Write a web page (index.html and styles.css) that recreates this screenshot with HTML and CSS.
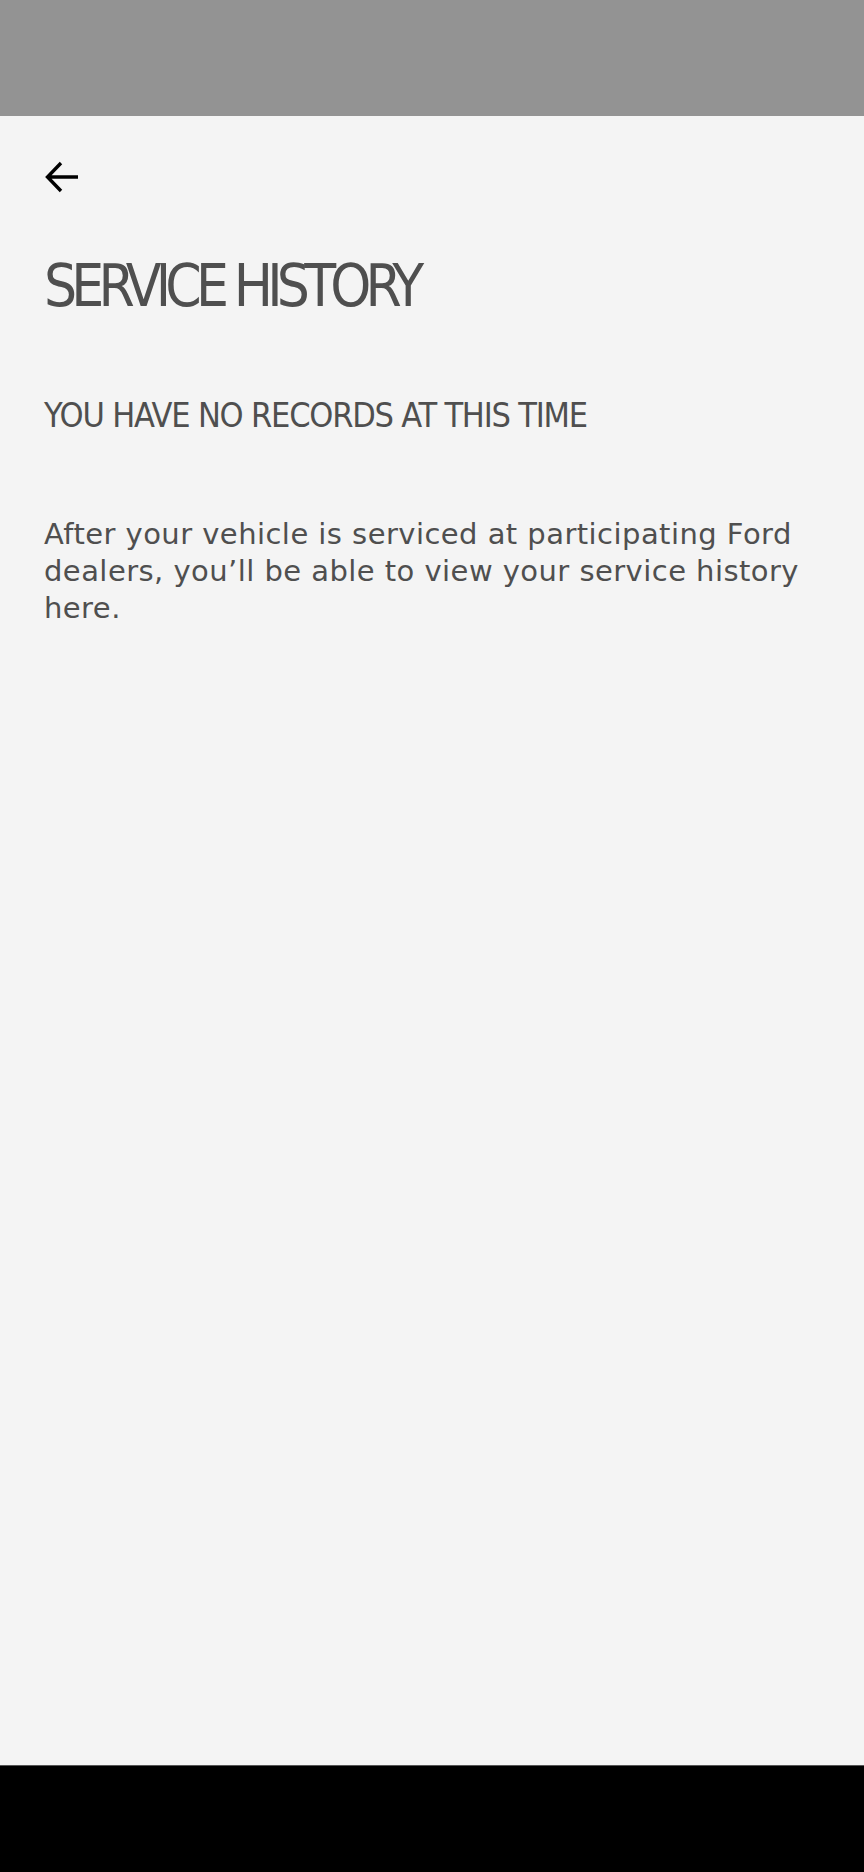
FILE: index.html
```html
<!DOCTYPE html>
<html>
<head>
<meta charset="utf-8">
<title>Service History</title>
<link rel="stylesheet" href="styles.css">
</head>
<body>
<div class="screen">
  <div class="status_bar"></div>

  <div class="content">
    <button class="back_btn" aria-label="Back">
      <svg width="36" height="34" viewBox="0 0 36 34">
        <path d="M34 17 H4 M17 3 L3.5 17 L17 31" fill="none" stroke="#000" stroke-width="3.4" stroke-linecap="butt" stroke-linejoin="miter"/>
      </svg>
    </button>

    <h1 class="page_title">SERVICE HISTORY</h1>

    <h2 class="empty_title">YOU HAVE NO RECORDS AT THIS TIME</h2>

    <p class="empty_text">After your vehicle is serviced at participating Ford dealers, you’ll be able to view your service history here.</p>
  </div>

  <div class="nav_bar"></div>
</div>
</body>
</html>
```

FILE: styles.css
```css
html, body{
  margin: 0;
  padding: 0;
  background-color: #f4f4f4;
}

.screen{
  display: flex;
  flex-direction: column;
  height: 1872px;
}

.status_bar{
  height: 116px;
  background-color: #939393;
}

.content{
  flex: 1;
  display: flex;
  flex-direction: column;
  align-items: flex-start;
  padding: 0 44px;
  background-color: #f4f4f4;
}

.back_btn{
  border: none;
  background: none;
  padding: 0;
  margin-top: 44px;
  width: 36px;
  height: 34px;
}

.back_btn svg{
  display: block;
}

.page_title{
  margin: 57px 0 0 0;
  font-family: "DejaVu Sans Condensed", "Liberation Sans", sans-serif;
  font-weight: normal;
  font-size: 58px;
  line-height: 70px;
  letter-spacing: -5.8px;
  color: #4f4f4f;
}

.empty_title{
  margin: 73px 0 0 0;
  font-family: "DejaVu Sans Condensed", "Liberation Sans", sans-serif;
  font-weight: normal;
  font-size: 34px;
  line-height: 42px;
  letter-spacing: -1.2px;
  color: #4f4f4f;
}

.empty_text{
  margin: 80px 0 0 0;
  font-family: "DejaVu Sans", sans-serif;
  font-size: 29px;
  line-height: 37px;
  letter-spacing: 0.45px;
  color: #4f4f4f;
}

.nav_bar{
  height: 106px;
  border-top: 1px solid #555;
  background-color: #000;
}
```
